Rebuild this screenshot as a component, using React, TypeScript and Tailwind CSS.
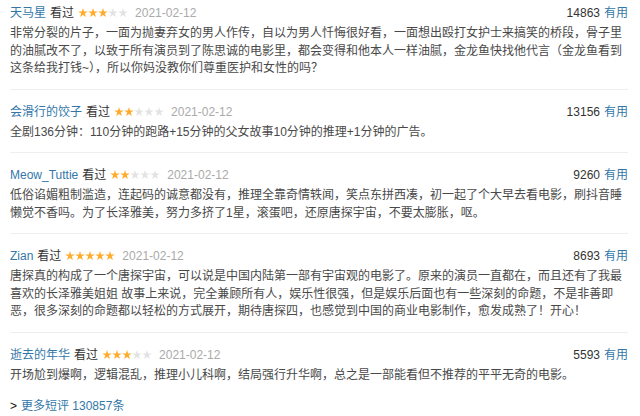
import React from 'react';

interface Review {
  name: string;
  rating: number;
  date: string;
  votes: number;
  text: string;
}

const reviews: Review[] = [
  {
    name: '天马星',
    rating: 3,
    date: '2021-02-12',
    votes: 14863,
    text: '非常分裂的片子，一面为抛妻弃女的男人作传，自以为男人忏悔很好看，一面想出殴打女护士来搞笑的桥段，骨子里的油腻改不了，以致于所有演员到了陈思诚的电影里，都会变得和他本人一样油腻，金龙鱼快找他代言（金龙鱼看到这条给我打钱~），所以你妈没教你们尊重医护和女性的吗？',
  },
  {
    name: '会滑行的饺子',
    rating: 2,
    date: '2021-02-12',
    votes: 13156,
    text: '全剧136分钟：110分钟的跑路+15分钟的父女故事10分钟的推理+1分钟的广告。',
  },
  {
    name: 'Meow_Tuttie',
    rating: 2,
    date: '2021-02-12',
    votes: 9260,
    text: '低俗谄媚粗制滥造，连起码的诚意都没有，推理全靠奇情轶闻，笑点东拼西凑，初一起了个大早去看电影，刷抖音睡懒觉不香吗。为了长泽雅美，努力多挤了1星，滚蛋吧，还原唐探宇宙，不要太膨胀，呕。',
  },
  {
    name: 'Zian',
    rating: 5,
    date: '2021-02-12',
    votes: 8693,
    text: '唐探真的构成了一个唐探宇宙，可以说是中国内陆第一部有宇宙观的电影了。原来的演员一直都在，而且还有了我最喜欢的长泽雅美姐姐 故事上来说，完全兼顾所有人，娱乐性很强，但是娱乐后面也有一些深刻的命题，不是非善即恶，很多深刻的命题都以轻松的方式展开，期待唐探四，也感觉到中国的商业电影制作，愈发成熟了！开心！',
  },
  {
    name: '逝去的年华',
    rating: 3,
    date: '2021-02-12',
    votes: 5593,
    text: '开场尬到爆啊，逻辑混乱，推理小儿科啊，结局强行升华啊，总之是一部能看但不推荐的平平无奇的电影。',
  },
];

const STAR = '5,0 6.12,3.45 9.76,3.45 6.82,5.59 7.94,9.05 5,6.91 2.06,9.05 3.18,5.59 0.24,3.45 3.88,3.45';

function Stars({ rating }: { rating: number }) {
  return (
    <svg width="50" height="10" viewBox="0 0 50 10" className="block">
      {[0, 1, 2, 3, 4].map((i) => (
        <polygon
          key={i}
          points={STAR}
          transform={`translate(${i * 10} 0)`}
          fill={i < rating ? '#ffac2d' : '#e3e3e3'}
        />
      ))}
    </svg>
  );
}

export default function App() {
  return (
    <div
      className="w-[640px] h-[416px] bg-white pl-[10px] pr-[12px] pt-[4px] overflow-hidden text-[12px]"
      style={{ fontFamily: '"Liberation Sans", "Noto Sans CJK SC", sans-serif' }}
    >
      {reviews.map((r, idx) => {
        const last = idx === reviews.length - 1;
        return (
          <div
            key={idx}
            className={`${idx === 0 ? 'pt-0' : 'pt-[13px]'} ${
              last ? 'pb-[10px]' : 'pb-[11px] border-b border-[#eeeeee]'
            }`}
          >
            {/* 头部：用户名 / 看过 / 评分 / 日期 / 有用 */}
            <div className="flex items-center h-[18px] leading-[18px]">
              <span className="text-[#3377aa]">{r.name}</span>
              <span className="ml-[4px] text-[#333]">看过</span>
              <span className="ml-[4px]">
                <Stars rating={r.rating} />
              </span>
              <span className="ml-[7px] text-[#aaaaaa]">{r.date}</span>
              <span className="ml-auto text-[#333]">{r.votes}</span>
              <span className="ml-[4px] text-[#3377aa]">有用</span>
            </div>
            <p className="mt-[3px] leading-[17.5px] text-[#494949] break-all">{r.text}</p>
          </div>
        );
      })}
      <div className="mt-[3px] leading-[18px] flex items-center">
        <span className="text-[#111]">&gt;</span>
        <span className="ml-[4px] text-[#3377aa]">更多短评 130857条</span>
      </div>
    </div>
  );
}
